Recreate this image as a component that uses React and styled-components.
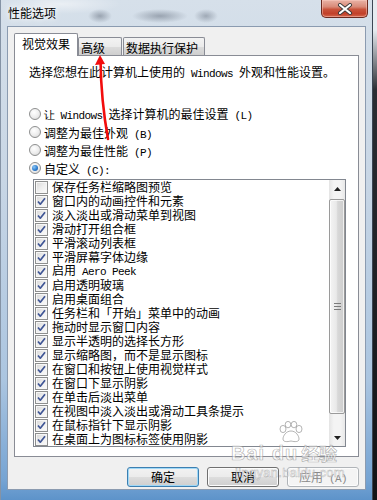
import React from 'react';
import styled, { createGlobalStyle } from 'styled-components';

const GlobalStyle = createGlobalStyle`
  html, body {
    margin: 0;
    padding: 0;
  }
  body {
    width: 377px;
    height: 500px;
    overflow: hidden;
    background: linear-gradient(180deg, #e6ebf0 0px, #e6ebf0 30px, #2a2d33 90px, #121316 100%);
    font-family: "Noto Sans CJK SC", "Liberation Sans", sans-serif;
    color: #000;
  }
`;

const Window = styled.div`
  position: relative;
  width: 373px;
  height: 500px;
  box-sizing: border-box;
  display: flex;
  flex-direction: column;
  border-left: 1px solid #8593a5;
  border-right: 1px solid #3b4654;
  background: linear-gradient(180deg, #d6e0ea 0px, #c8d6e5 180px, #abc5e0 380px, #76a4d3 480px, #5d93ca 500px);
`;

const TitleBar = styled.div`
  height: 26px;
  flex: none;
  display: flex;
  justify-content: space-between;
  align-items: flex-start;
  background:
    radial-gradient(ellipse 12px 7px at 99px 16px, rgba(105, 115, 130, 0.55), transparent),
    radial-gradient(ellipse 28px 7px at 159px 16px, rgba(105, 115, 130, 0.55), transparent),
    radial-gradient(ellipse 12px 7px at 205px 16px, rgba(105, 115, 130, 0.5), transparent),
    radial-gradient(ellipse 60px 10px at 60px 4px, rgba(255, 255, 255, 0.5), transparent);
`;

const Title = styled.div`
  margin: 6px 0 0 7px;
  font-size: 12px;
  line-height: 14px;
  text-shadow: 0 0 5px #fff, 0 0 8px rgba(255, 255, 255, 0.9);
`;

const CloseButton = styled.div`
  width: 47px;
  height: 18px;
  margin-right: 4px;
  box-sizing: border-box;
  display: flex;
  align-items: center;
  justify-content: center;
  border: 1px solid #6b2a20;
  border-top: none;
  border-radius: 0 0 5px 5px;
  background: linear-gradient(180deg, #e9b3a6 0%, #d98a78 40%, #c9533b 55%, #c2412a 80%, #d4664c 100%);
  box-shadow: inset 0 0 0 1px rgba(255, 210, 200, 0.45);
`;

const Body = styled.div`
  flex: 1;
  display: flex;
  padding: 0 6px 10px 6px;
  min-height: 0;
`;

const Client = styled.div`
  flex: 1;
  display: flex;
  flex-direction: column;
  border: 1px solid #8b9bb0;
  background: #f0f0f0;
  padding: 6px 6px 0 6px;
`;

const TabRow = styled.div`
  height: 22px;
  display: flex;
  align-items: flex-end;
  position: relative;
  z-index: 1;
`;

const Tab = styled.div`
  box-sizing: border-box;
  width: ${(p) => p.$width}px;
  margin-left: ${(p) => p.$gap || 0}px;
  padding-left: ${(p) => p.$pad || 0}px;
  text-align: ${(p) => (p.$active ? 'center' : 'left')};
  font-size: 12px;
  border: 1px solid #898c95;
  border-bottom: none;
  border-radius: 2px 2px 0 0;
  height: ${(p) => (p.$active ? 23 : 18)}px;
  margin-bottom: ${(p) => (p.$active ? -1 : 0)}px;
  line-height: ${(p) => (p.$active ? 20 : 19)}px;
  background: ${(p) =>
    p.$active
      ? '#fff'
      : 'linear-gradient(180deg, #f3f3f3 0%, #ebebeb 50%, #dcdcdc 51%, #cfcfcf 100%)'};
`;

const Panel = styled.div`
  height: 402px;
  box-sizing: border-box;
  background: #fff;
  border: 1px solid #898c95;
  padding: 9px 12px 0 14px;
  display: flex;
  flex-direction: column;
`;

const Text = styled.p`
  margin: 0;
  font-size: 12px;
  line-height: 14px;
  white-space: nowrap;
`;

const Latin = styled.span`
  font-family: "Liberation Mono", monospace;
  font-size: 11px;
  letter-spacing: -0.6px;
  white-space: pre;
`;

const RadioGroup = styled.div`
  margin-top: 24px;
  display: flex;
  flex-direction: column;
`;

const RadioRow = styled.div`
  height: 18px;
  display: flex;
  align-items: center;
  gap: 3px;
  font-size: 12px;
  white-space: nowrap;
`;

const Radio = styled.span`
  width: 12px;
  height: 12px;
  box-sizing: border-box;
  border-radius: 50%;
  border: 1px solid #8e8f8f;
  background: radial-gradient(circle at 40% 35%, #ffffff 0%, #ececec 55%, #cfcfcf 100%);
  display: flex;
  align-items: center;
  justify-content: center;
  &::after {
    content: '';
    display: ${(p) => (p.$checked ? 'block' : 'none')};
    width: 6px;
    height: 6px;
    border-radius: 50%;
    background: radial-gradient(circle at 35% 35%, #8cc6f5 0%, #2f7fd0 55%, #1b4f96 100%);
  }
`;

const ListBox = styled.div`
  margin: 2px 0 0 4px;
  height: 268px;
  box-sizing: border-box;
  border: 1px solid #828790;
  background: #fff;
  display: flex;
`;

const List = styled.div`
  flex: 1;
  display: flex;
  flex-direction: column;
`;

const CheckRow = styled.div`
  height: 14px;
  display: flex;
  align-items: center;
  gap: 4px;
  padding-left: 1px;
  font-size: 12px;
  line-height: 14px;
  white-space: nowrap;
`;

const CheckBox = styled.span`
  width: 13px;
  height: 13px;
  flex: none;
  box-sizing: border-box;
  border: 1px solid #8e8f8f;
  background: linear-gradient(135deg, #d6d6d6 0%, #eeeeee 50%, #fbfbfb 100%);
  box-shadow: inset 0 0 0 1px #f6f6f6;
  display: flex;
  align-items: center;
  justify-content: center;
`;

const ScrollBar = styled.div`
  width: 16px;
  display: flex;
  flex-direction: column;
  background: linear-gradient(90deg, #e4e4e4 0%, #f4f4f4 30%, #f4f4f4 70%, #e8e8e8 100%);
`;

const ArrowButton = styled.div`
  height: 17px;
  flex: none;
  display: flex;
  align-items: center;
  justify-content: center;
`;

const Thumb = styled.div`
  margin: 2px 0 0 0;
  height: 215px;
  box-sizing: border-box;
  border: 1px solid #9a9a9a;
  border-radius: 2px;
  background: linear-gradient(90deg, #f4f4f4 0%, #e9e9e9 45%, #d8d8d8 55%, #cdcdcd 100%);
  box-shadow: inset 0 0 0 1px rgba(255, 255, 255, 0.7);
  display: flex;
  align-items: center;
  justify-content: center;
`;

const Track = styled.div`
  flex: 1;
`;

const ButtonRow = styled.div`
  margin-top: 10px;
  display: flex;
  justify-content: flex-end;
  gap: 8px;
`;

const Button = styled.div`
  width: 72px;
  height: 20px;
  box-sizing: border-box;
  border-radius: 3px;
  font-size: 12px;
  line-height: 18px;
  text-align: center;
  white-space: nowrap;
  color: ${(p) => (p.$disabled ? '#8a8a8a' : '#000')};
  border: 1px solid ${(p) => (p.$default ? '#3c7fb1' : p.$disabled ? '#b0b4b8' : '#707070')};
  background: ${(p) =>
    p.$disabled
      ? '#f4f4f4'
      : 'linear-gradient(180deg, #f2f2f2 0%, #ebebeb 50%, #dddddd 51%, #cfcfcf 100%)'};
  box-shadow: ${(p) => (p.$default ? 'inset 0 0 0 1px #9fd8f7' : 'inset 0 0 0 1px #fcfcfc')};
`;

const Arrow = styled.svg`
  position: absolute;
  left: 86px;
  top: 50px;
  pointer-events: none;
`;

const Watermark = styled.div`
  position: absolute;
  left: 230px;
  top: 421px;
  width: 122px;
  display: flex;
  flex-direction: column;
  pointer-events: none;
  color: rgba(255, 255, 255, 0.6);
  -webkit-text-stroke: 0.7px rgba(120, 120, 120, 0.55);
`;

const Paw = styled.svg`
  margin-left: 46px;
`;

const LogoRow = styled.div`
  display: flex;
  align-items: flex-end;
  height: 18px;
  margin-top: 1px;
`;

const LogoWord = styled.span`
  font-family: "Liberation Sans", sans-serif;
  font-weight: bold;
  font-size: 20px;
  line-height: 18px;
  letter-spacing: 1px;
`;

const LogoCjk = styled.span`
  font-family: "Noto Sans CJK SC", sans-serif;
  font-weight: bold;
  font-size: 18px;
  line-height: 18px;
  margin-left: 3px;
`;

const Url = styled.span`
  margin: 4px 0 0 4px;
  font-family: "Liberation Sans", sans-serif;
  font-size: 13px;
  line-height: 13px;
  letter-spacing: 0.3px;
  -webkit-text-stroke: 0.5px rgba(120, 120, 120, 0.5);
`;

const effects = [
  { label: '保存任务栏缩略图预览', checked: false },
  { label: '窗口内的动画控件和元素', checked: true },
  { label: '淡入淡出或滑动菜单到视图', checked: true },
  { label: '滑动打开组合框', checked: true },
  { label: '平滑滚动列表框', checked: true },
  { label: '平滑屏幕字体边缘', checked: true },
  { label: '启用', latin: ' Aero Peek', checked: true },
  { label: '启用透明玻璃', checked: true },
  { label: '启用桌面组合', checked: true },
  { label: '任务栏和「开始」菜单中的动画', checked: true },
  { label: '拖动时显示窗口内容', checked: true },
  { label: '显示半透明的选择长方形', checked: true },
  { label: '显示缩略图，而不是显示图标', checked: true },
  { label: '在窗口和按钮上使用视觉样式', checked: true },
  { label: '在窗口下显示阴影', checked: true },
  { label: '在单击后淡出菜单', checked: true },
  { label: '在视图中淡入淡出或滑动工具条提示', checked: true },
  { label: '在鼠标指针下显示阴影', checked: true },
  { label: '在桌面上为图标标签使用阴影', checked: true },
];

const options = [
  { label: [<Latin key="a">让 </Latin>, <Latin key="b">Windows </Latin>, '选择计算机的最佳设置', <Latin key="c"> (L)</Latin>] },
  { label: ['调整为最佳外观', <Latin key="c"> (B)</Latin>] },
  { label: ['调整为最佳性能', <Latin key="c"> (P)</Latin>] },
  { label: ['自定义', <Latin key="c"> (C):</Latin>], checked: true },
];

const Check = () => (
  <svg width="11" height="11" viewBox="0 0 11 11">
    <path d="M2 5.5 L4.3 8.2 L9 2.2" fill="none" stroke="#3f5595" strokeWidth="1.7" strokeLinejoin="round" />
  </svg>
);

const App = () => (
  <>
    <GlobalStyle />
    <Window>
      <TitleBar>
        <Title>性能选项</Title>
        <CloseButton>
          <svg width="16" height="12" viewBox="0 0 16 12">
            <path d="M3 2 L13 10 M13 2 L3 10" stroke="#3a3a3a" strokeWidth="4" strokeLinecap="round" />
            <path d="M3 2 L13 10 M13 2 L3 10" stroke="#ffffff" strokeWidth="2.2" strokeLinecap="round" />
          </svg>
        </CloseButton>
      </TitleBar>
      <Body>
        <Client>
          <TabRow>
            <Tab $active $width={64}>视觉效果</Tab>
            <Tab $width={44} $pad={2}>高级</Tab>
            <Tab $width={82} $gap={1} $pad={2}>数据执行保护</Tab>
          </TabRow>
          <Panel>
            <Text>
              选择您想在此计算机上使用的<Latin> Windows </Latin>外观和性能设置。
            </Text>
            <RadioGroup>
              {options.map((o, i) => (
                <RadioRow key={i}>
                  <Radio $checked={o.checked} />
                  <span>{o.label}</span>
                </RadioRow>
              ))}
            </RadioGroup>
            <ListBox>
              <List>
                {effects.map((e, i) => (
                  <CheckRow key={i}>
                    <CheckBox>{e.checked && <Check />}</CheckBox>
                    <span>
                      {e.label}
                      {e.latin && <Latin>{e.latin}</Latin>}
                    </span>
                  </CheckRow>
                ))}
              </List>
              <ScrollBar>
                <ArrowButton>
                  <svg width="7" height="4" viewBox="0 0 7 4">
                    <path d="M0 4 L3.5 0 L7 4 Z" fill="#202020" />
                  </svg>
                </ArrowButton>
                <Thumb>
                  <svg width="7" height="7" viewBox="0 0 7 7">
                    <path d="M0 0.5 H7 M0 3.5 H7 M0 6.5 H7" stroke="#7b7b7b" strokeWidth="1" />
                  </svg>
                </Thumb>
                <Track />
                <ArrowButton>
                  <svg width="7" height="4" viewBox="0 0 7 4">
                    <path d="M0 0 L3.5 4 L7 0 Z" fill="#202020" />
                  </svg>
                </ArrowButton>
              </ScrollBar>
            </ListBox>
          </Panel>
          <ButtonRow>
            <Button $default>确定</Button>
            <Button>取消</Button>
            <Button $disabled>
              应用<Latin> (A)</Latin>
            </Button>
          </ButtonRow>
        </Client>
      </Body>

      <Arrow width="30" height="95" viewBox="0 0 30 95">
        <path d="M13.5 10 Q14 50 21 89" fill="none" stroke="#f20d0d" strokeWidth="2.6" strokeLinecap="round" />
        <path d="M13 5 L8 15 L18 14 Z" fill="#f20d0d" />
      </Arrow>

      <Watermark>
        <Paw width="28" height="22" viewBox="0 0 28 22">
          <g fill="rgba(255,255,255,0.6)" stroke="rgba(120,120,120,0.55)" strokeWidth="1">
            <ellipse cx="6" cy="8" rx="3" ry="3.6" />
            <ellipse cx="11" cy="3.6" rx="2.8" ry="3.2" />
            <ellipse cx="17" cy="3.6" rx="2.8" ry="3.2" />
            <ellipse cx="22" cy="8" rx="3" ry="3.6" />
            <path d="M14 10 C9 10 6 15 6 18 C6 21 10 21 14 20 C18 21 22 21 22 18 C22 15 19 10 14 10 Z" />
          </g>
        </Paw>
        <LogoRow>
          <LogoWord>Bai du</LogoWord>
          <LogoCjk>经验</LogoCjk>
        </LogoRow>
        <Url>jingyan.baidu.com</Url>
      </Watermark>
    </Window>
  </>
);

export default App;
